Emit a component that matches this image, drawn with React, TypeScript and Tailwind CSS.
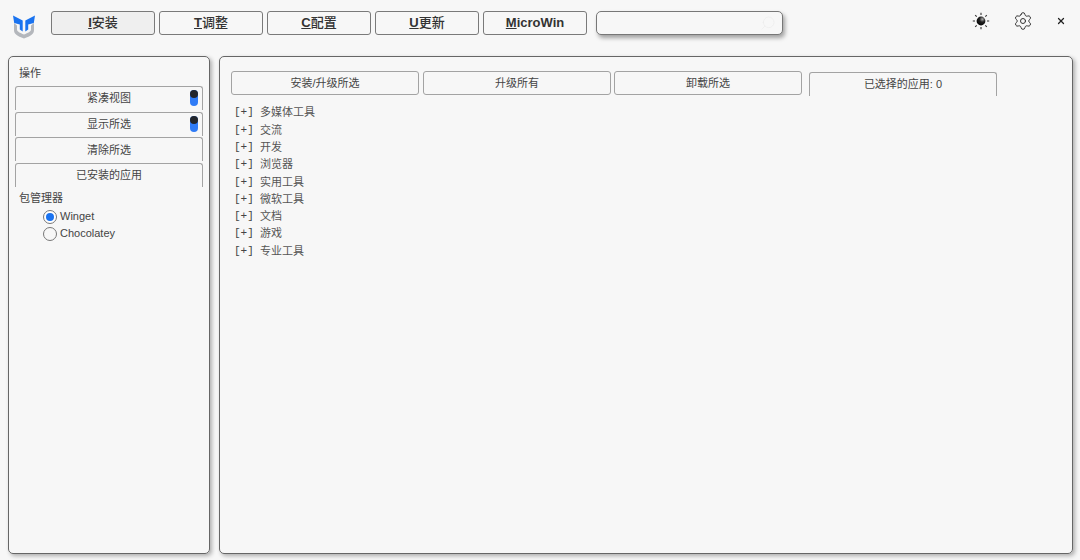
import { Search, Settings, X } from "lucide-react";

const cjk = "font-['Liberation_Sans','Noto_Sans_CJK_SC',sans-serif]";

const navItems = [
  { key: "I", label: "安装", active: true },
  { key: "T", label: "调整" },
  { key: "C", label: "配置" },
  { key: "U", label: "更新" },
  { key: "M", label: "icroWin", latin: true },
];

const categories = ["多媒体工具", "交流", "开发", "浏览器", "实用工具", "微软工具", "文档", "游戏", "专业工具"];

function Logo() {
  return (
    <svg width="24" height="24" viewBox="0 0 24 24" className="shrink-0">
      <path d="M2 8 V15 C2 19 5 21 12 23.5 C19 21 22 19 22 15 V8 L19 10.5 V14.5 C19 16.5 16 18 12 19.5 C8 18 5 16.5 5 14.5 V10.5 Z" fill="#b4b7bc" />
      <path d="M1 0.5 L10.7 5.5 V16.5 L7.8 14.5 V9.5 L2.2 8 Z" fill="#1a73f0" />
      <path d="M23 0.5 L13.3 5.5 V16.5 L16.2 14.5 V9.5 L21.8 8 Z" fill="#1a73f0" />
    </svg>
  );
}

function SunIcon() {
  return (
    <svg width="18" height="18" viewBox="0 0 18 18">
      <defs>
        <radialGradient id="sunball" cx="0.65" cy="0.3" r="0.8">
          <stop offset="0" stopColor="#b0b0b0" />
          <stop offset="0.4" stopColor="#222" />
          <stop offset="1" stopColor="#000" />
        </radialGradient>
      </defs>
      <circle cx="9" cy="9" r="4.4" fill="url(#sunball)" />
      <path
        d="M9 .8v2.2M9 15v2.2M.8 9H3M15 9h2.2M3.2 3.2l1.5 1.5M13.3 13.3l1.5 1.5M3.2 14.8l1.5-1.5M13.3 4.7l1.5-1.5"
        stroke="#333"
        strokeWidth="1.1"
        fill="none"
      />
    </svg>
  );
}

function ToggleDot() {
  return (
    <span className="absolute right-[4px] top-[3px] flex h-[16px] w-[8px] flex-col items-center rounded-full bg-[#2f7bf6]">
      <span className="size-[8px] rounded-full bg-[#22252b]" />
    </span>
  );
}

function SideButton({ label, toggle }: { label: string; toggle?: boolean }) {
  return (
    <div className="relative flex h-[24px] items-center justify-center rounded-t-[3px] border border-b-0 border-[#a3a3a3] bg-[#f7f7f7] text-[11px] text-[#444]">
      {label}
      {toggle && <ToggleDot />}
    </div>
  );
}

function ActionButton({ label, className }: { label: string; className?: string }) {
  return (
    <div className={`flex h-[24px] w-[188px] items-center justify-center rounded-[3px] border border-[#a3a3a3] bg-[#f7f7f7] text-[11px] text-[#444] ${className ?? ""}`}>
      {label}
    </div>
  );
}

export default function App() {
  return (
    <div className={`flex h-[560px] w-[1080px] flex-col overflow-hidden bg-[#f7f7f7] ${cjk}`}>
      <header className="flex h-[56px] shrink-0 items-start">
        <div className="ml-[12px] mt-[15px] w-[39px]">
          <Logo />
        </div>
        <nav className="mt-[11px] flex gap-[4px]">
          {navItems.map((item) => (
            <button
              key={item.key}
              className={`flex h-[24px] w-[104px] items-center justify-center rounded-[3px] border border-[#7a7a7a] text-[13px] text-[#333] ${
                item.latin ? "font-bold" : "font-medium"
              } ${item.active ? "bg-[#efefef]" : "bg-[#f7f7f7]"}`}
            >
              <span className="font-bold underline">{item.key}</span>
              {item.label}
            </button>
          ))}
        </nav>
        <div className="ml-[9px] mt-[11px] flex h-[24px] w-[187px] items-center justify-end rounded-[5px] border border-[#777] bg-[#f7f7f7] pr-[6px] shadow-[2px_3px_4px_rgba(0,0,0,0.35)]">
          <Search size={16} strokeWidth={1} className="-scale-x-100 text-[#ececec]" />
        </div>
        <div className="ml-auto mr-[14px] mt-[11px] flex h-[20px] items-center">
          <SunIcon />
          <Settings size={20} strokeWidth={1.2} className="ml-[23px] text-[#333]" />
          <X size={10} strokeWidth={3} className="ml-[23px] text-[#222]" />
        </div>
      </header>

      <main className="flex min-h-0 flex-1 gap-[9px] pb-[6px] pl-[8px] pr-[7px]">
        <aside className="flex w-[202px] shrink-0 flex-col rounded-[5px] border border-[#666] px-[6px] pt-[9px] text-[11px] text-[#444] shadow-[2px_2px_4px_rgba(0,0,0,0.3)]">
          <div className="mb-[5px] h-[15px] pl-[4px] leading-[15px]">操作</div>
          <div className="flex flex-col gap-[1.7px]">
            <SideButton label="紧凑视图" toggle />
            <SideButton label="显示所选" toggle />
            <SideButton label="清除所选" />
            <SideButton label="已安装的应用" />
          </div>
          <div className="mt-[4px] pl-[4px] leading-[15px]">包管理器</div>
          <div className="mt-[3px] flex flex-col gap-[2px] pl-[28px]">
            <label className="flex h-[15px] items-center gap-[3px]">
              <span className="flex size-[14px] items-center justify-center rounded-full border border-[#777] bg-white">
                <span className="size-[8px] rounded-full bg-[#1a73f0]" />
              </span>
              Winget
            </label>
            <label className="flex h-[15px] items-center gap-[3px]">
              <span className="size-[14px] rounded-full border border-[#777] bg-[#f7f7f7]" />
              Chocolatey
            </label>
          </div>
        </aside>

        <section className="min-w-0 flex-1 rounded-[5px] border border-[#666] pl-[11px] pt-[14px] shadow-[2px_2px_4px_rgba(0,0,0,0.3)]">
          <div className="flex items-start gap-[4px]">
            <ActionButton label="安装/升级所选" />
            <ActionButton label="升级所有" />
            <ActionButton label="卸载所选" className="-ml-[1px]" />
            <div className="ml-[3px] mt-[1px] flex h-[24px] w-[188px] items-center justify-center rounded-t-[3px] border border-b-0 border-[#a3a3a3] text-[11px] text-[#444]">
              已选择的应用: 0
            </div>
          </div>
          <ul className="mt-[8px] pl-[3px] text-[11px] text-[#555]">
            {categories.map((name) => (
              <li key={name} className="flex h-[17.3px] items-center">
                <span className="w-[26px] font-['Liberation_Mono',monospace] text-[#444]">[+]</span>
                {name}
              </li>
            ))}
          </ul>
        </section>
      </main>
    </div>
  );
}
